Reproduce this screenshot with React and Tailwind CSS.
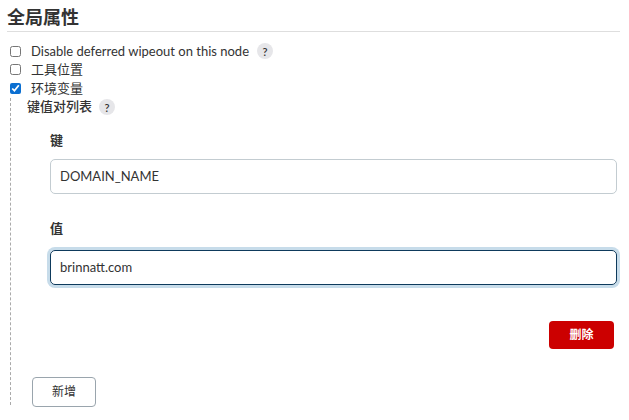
function HelpIcon({ gap = "ml-[8px]" }) {
  return (
    <span
      className={`inline-flex items-center justify-center w-[16px] h-[16px] rounded-full bg-[#e6e6e9] text-[11px] text-[#333] font-semibold leading-none ${gap}`}
    >
      ?
    </span>
  );
}

function CheckRow({ label, checked, help }) {
  return (
    <label className="flex items-center h-[18.5px]">
      <input
        type="checkbox"
        defaultChecked={checked}
        className="w-[11px] h-[11px] ml-[10px] mr-[10px] accent-[#0b6fd1]"
      />
      <span>{label}</span>
      {help && <HelpIcon />}
    </label>
  );
}

export default function App() {
  return (
    <div
      className="w-[629px] h-[420px] bg-white text-[#333] text-[13px] overflow-hidden"
      style={{ fontFamily: 'Lato, "Noto Sans CJK SC", sans-serif' }}
    >
      <div className="px-[7px] pt-[4px]">
        <h2 className="text-[18px] font-bold leading-[26px] pb-[1px] border-b border-[#dedede] w-[613px]">
          全局属性
        </h2>
      </div>

      <div className="mt-[10px]">
        <CheckRow label="Disable deferred wipeout on this node" help />
        <CheckRow label="工具位置" />
        <CheckRow label="环境变量" checked />
      </div>

      <div className="ml-[10px] border-l border-dashed border-[#aaa] pb-[14px] h-[307px]">
        <div className="flex items-center pl-[16px] h-[19px] font-medium">
          键值对列表
          <HelpIcon gap="ml-[7px]" />
        </div>

        <div className="pl-[39px] pr-[12px]">
          <div className="mt-[14px] font-semibold leading-[18px]">键</div>
          <input
            defaultValue="DOMAIN_NAME"
            className="mt-[10px] block w-full h-[35px] rounded-[5px] border border-[#c3ccd1] px-[9px] text-[13px] text-[#333] outline-none"
          />

          <div className="mt-[25px] font-semibold leading-[18px]">值</div>
          <input
            defaultValue="brinnatt.com"
            className="mt-[13px] block w-full h-[35px] rounded-[5px] border border-[#0e3a5c] px-[9px] text-[13px] text-[#333] outline-none ring-[3px] ring-[#c7dcea]"
          />

          <div className="flex justify-end mt-[36px] pr-[3px]">
            <button className="w-[65px] h-[28px] rounded-[4px] bg-[#cc0000] text-white text-[12px] font-bold">
              删除
            </button>
          </div>
        </div>

        <button className="ml-[21px] mt-[28px] w-[64px] h-[30px] rounded-[4px] border border-[#9aa5ad] bg-white text-[12px] text-[#333]">
          新增
        </button>
      </div>
    </div>
  );
}
